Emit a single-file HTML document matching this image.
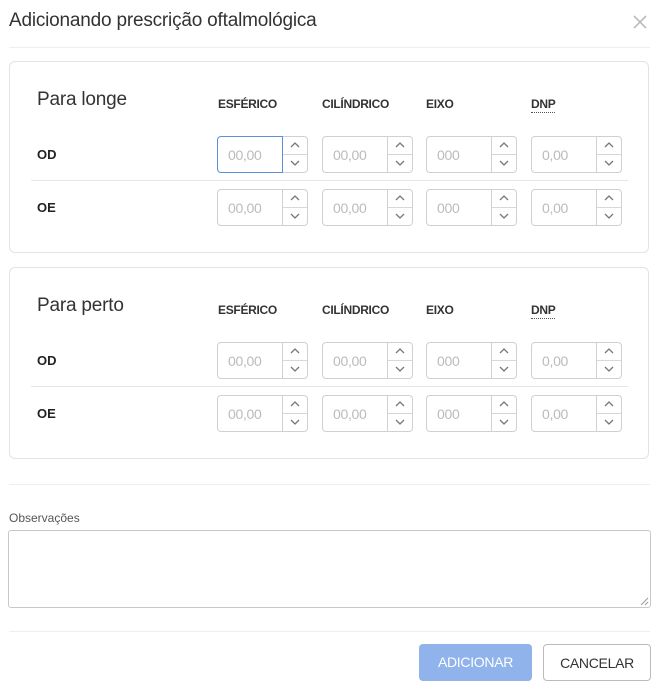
<!DOCTYPE html>
<html><head><meta charset="utf-8"><style>
body{margin:0;width:661px;height:688px;background:#fff;font-family:"Liberation Sans",sans-serif;position:relative;overflow:hidden;color:#333}
.a{position:absolute}
.title{left:9px;top:10px;font-size:19px;color:#333;letter-spacing:-0.2px}
.hr{position:absolute;height:1px;background:#eee}
.card{position:absolute;left:9px;width:640px;height:192px;border:1px solid #e3e3e3;border-radius:6px;box-sizing:border-box}
.h2{font-size:19px;color:#333;letter-spacing:-0.2px}
.th{font-size:12px;font-weight:bold;color:#333;letter-spacing:-0.3px}
.lab{font-size:13px;font-weight:bold;color:#222}
.f{position:absolute;width:91px;height:37px}
.in{position:absolute;left:0;top:0;width:66px;height:37px;box-sizing:border-box;border:1px solid #d0d0d0;border-radius:4px 0 0 4px;font-size:14px;color:#bbb;padding:10px 0 0 10px;letter-spacing:-0.3px}
.in.foc{border-color:#5b8fdc}
.sp{position:absolute;left:66px;top:0;width:25px;height:37px;box-sizing:border-box;border:1px solid #d0d0d0;border-left:none;border-radius:0 4px 4px 0}
.sp:after{content:"";position:absolute;left:0;right:0;top:17px;height:1px;background:#d8d8d8}
.sp svg{position:absolute;left:7px}
.btn{position:absolute;top:644px;height:37px;border-radius:4px;font-size:14px;box-sizing:border-box;text-align:center;line-height:37px;letter-spacing:-0.3px}
</style></head><body>
<div class="a title">Adicionando prescrição oftalmológica</div>
<svg class="a" style="left:632px;top:14px" width="16" height="16" viewBox="0 0 16 16"><path d="M2 2L14 14M14 2L2 14" stroke="#bbb" stroke-width="1.6"/></svg>
<div class="hr" style="left:9px;width:641px;top:47px"></div>

<div class="card" style="top:61px"></div>
<div class="card" style="top:267px"></div>

<div class="a h2" style="left:37px;top:89px">Para longe</div>
<div class="a h2" style="left:37px;top:295px">Para perto</div>

<div class="a th" style="left:218px;top:97px">ESFÉRICO</div>
<div class="a th" style="left:322px;top:97px">CILÍNDRICO</div>
<div class="a th" style="left:426px;top:97px">EIXO</div>
<div class="a th" style="left:531px;top:97px;border-bottom:1px dotted #555;line-height:15px">DNP</div>
<div class="a th" style="left:218px;top:303px">ESFÉRICO</div>
<div class="a th" style="left:322px;top:303px">CILÍNDRICO</div>
<div class="a th" style="left:426px;top:303px">EIXO</div>
<div class="a th" style="left:531px;top:303px;border-bottom:1px dotted #555;line-height:15px">DNP</div>

<div class="a lab" style="left:37px;top:147px">OD</div>
<div class="a lab" style="left:37px;top:200px">OE</div>
<div class="a lab" style="left:37px;top:353px">OD</div>
<div class="a lab" style="left:37px;top:406px">OE</div>
<div class="hr" style="left:31px;width:597px;top:180px;background:#e6e6e6"></div>
<div class="hr" style="left:31px;width:597px;top:386px;background:#e6e6e6"></div>

<div class="f" style="left:217px;top:136px"><div class="in foc">00,00</div><div class="sp"><svg style="top:4px" width="10" height="8"><path d="M1 6L5 2L9 6" fill="none" stroke="#777" stroke-width="1.3"/></svg><svg style="top:22px" width="10" height="8"><path d="M1 2L5 6L9 2" fill="none" stroke="#777" stroke-width="1.3"/></svg></div></div>
<div class="f" style="left:322px;top:136px"><div class="in">00,00</div><div class="sp"><svg style="top:4px" width="10" height="8"><path d="M1 6L5 2L9 6" fill="none" stroke="#777" stroke-width="1.3"/></svg><svg style="top:22px" width="10" height="8"><path d="M1 2L5 6L9 2" fill="none" stroke="#777" stroke-width="1.3"/></svg></div></div>
<div class="f" style="left:426px;top:136px"><div class="in">000</div><div class="sp"><svg style="top:4px" width="10" height="8"><path d="M1 6L5 2L9 6" fill="none" stroke="#777" stroke-width="1.3"/></svg><svg style="top:22px" width="10" height="8"><path d="M1 2L5 6L9 2" fill="none" stroke="#777" stroke-width="1.3"/></svg></div></div>
<div class="f" style="left:531px;top:136px"><div class="in">0,00</div><div class="sp"><svg style="top:4px" width="10" height="8"><path d="M1 6L5 2L9 6" fill="none" stroke="#777" stroke-width="1.3"/></svg><svg style="top:22px" width="10" height="8"><path d="M1 2L5 6L9 2" fill="none" stroke="#777" stroke-width="1.3"/></svg></div></div>

<div class="f" style="left:217px;top:189px"><div class="in">00,00</div><div class="sp"><svg style="top:4px" width="10" height="8"><path d="M1 6L5 2L9 6" fill="none" stroke="#777" stroke-width="1.3"/></svg><svg style="top:22px" width="10" height="8"><path d="M1 2L5 6L9 2" fill="none" stroke="#777" stroke-width="1.3"/></svg></div></div>
<div class="f" style="left:322px;top:189px"><div class="in">00,00</div><div class="sp"><svg style="top:4px" width="10" height="8"><path d="M1 6L5 2L9 6" fill="none" stroke="#777" stroke-width="1.3"/></svg><svg style="top:22px" width="10" height="8"><path d="M1 2L5 6L9 2" fill="none" stroke="#777" stroke-width="1.3"/></svg></div></div>
<div class="f" style="left:426px;top:189px"><div class="in">000</div><div class="sp"><svg style="top:4px" width="10" height="8"><path d="M1 6L5 2L9 6" fill="none" stroke="#777" stroke-width="1.3"/></svg><svg style="top:22px" width="10" height="8"><path d="M1 2L5 6L9 2" fill="none" stroke="#777" stroke-width="1.3"/></svg></div></div>
<div class="f" style="left:531px;top:189px"><div class="in">0,00</div><div class="sp"><svg style="top:4px" width="10" height="8"><path d="M1 6L5 2L9 6" fill="none" stroke="#777" stroke-width="1.3"/></svg><svg style="top:22px" width="10" height="8"><path d="M1 2L5 6L9 2" fill="none" stroke="#777" stroke-width="1.3"/></svg></div></div>

<div class="f" style="left:217px;top:342px"><div class="in">00,00</div><div class="sp"><svg style="top:4px" width="10" height="8"><path d="M1 6L5 2L9 6" fill="none" stroke="#777" stroke-width="1.3"/></svg><svg style="top:22px" width="10" height="8"><path d="M1 2L5 6L9 2" fill="none" stroke="#777" stroke-width="1.3"/></svg></div></div>
<div class="f" style="left:322px;top:342px"><div class="in">00,00</div><div class="sp"><svg style="top:4px" width="10" height="8"><path d="M1 6L5 2L9 6" fill="none" stroke="#777" stroke-width="1.3"/></svg><svg style="top:22px" width="10" height="8"><path d="M1 2L5 6L9 2" fill="none" stroke="#777" stroke-width="1.3"/></svg></div></div>
<div class="f" style="left:426px;top:342px"><div class="in">000</div><div class="sp"><svg style="top:4px" width="10" height="8"><path d="M1 6L5 2L9 6" fill="none" stroke="#777" stroke-width="1.3"/></svg><svg style="top:22px" width="10" height="8"><path d="M1 2L5 6L9 2" fill="none" stroke="#777" stroke-width="1.3"/></svg></div></div>
<div class="f" style="left:531px;top:342px"><div class="in">0,00</div><div class="sp"><svg style="top:4px" width="10" height="8"><path d="M1 6L5 2L9 6" fill="none" stroke="#777" stroke-width="1.3"/></svg><svg style="top:22px" width="10" height="8"><path d="M1 2L5 6L9 2" fill="none" stroke="#777" stroke-width="1.3"/></svg></div></div>

<div class="f" style="left:217px;top:395px"><div class="in">00,00</div><div class="sp"><svg style="top:4px" width="10" height="8"><path d="M1 6L5 2L9 6" fill="none" stroke="#777" stroke-width="1.3"/></svg><svg style="top:22px" width="10" height="8"><path d="M1 2L5 6L9 2" fill="none" stroke="#777" stroke-width="1.3"/></svg></div></div>
<div class="f" style="left:322px;top:395px"><div class="in">00,00</div><div class="sp"><svg style="top:4px" width="10" height="8"><path d="M1 6L5 2L9 6" fill="none" stroke="#777" stroke-width="1.3"/></svg><svg style="top:22px" width="10" height="8"><path d="M1 2L5 6L9 2" fill="none" stroke="#777" stroke-width="1.3"/></svg></div></div>
<div class="f" style="left:426px;top:395px"><div class="in">000</div><div class="sp"><svg style="top:4px" width="10" height="8"><path d="M1 6L5 2L9 6" fill="none" stroke="#777" stroke-width="1.3"/></svg><svg style="top:22px" width="10" height="8"><path d="M1 2L5 6L9 2" fill="none" stroke="#777" stroke-width="1.3"/></svg></div></div>
<div class="f" style="left:531px;top:395px"><div class="in">0,00</div><div class="sp"><svg style="top:4px" width="10" height="8"><path d="M1 6L5 2L9 6" fill="none" stroke="#777" stroke-width="1.3"/></svg><svg style="top:22px" width="10" height="8"><path d="M1 2L5 6L9 2" fill="none" stroke="#777" stroke-width="1.3"/></svg></div></div>

<div class="hr" style="left:9px;width:641px;top:484px"></div>
<div class="a" style="left:9px;top:511px;font-size:12px;color:#555">Observações</div>
<div class="a" style="left:8px;top:530px;width:643px;height:78px;box-sizing:border-box;border:1px solid #c8c8c8;border-radius:3px"></div>
<svg class="a" style="left:640px;top:597px" width="9" height="9"><path d="M8 1L1 8M8 5L5 8" stroke="#999" stroke-width="1"/></svg>
<div class="hr" style="left:9px;width:641px;top:631px"></div>
<div class="btn" style="left:419px;width:113px;background:#8fb3ea;color:#fff">ADICIONAR</div>
<div class="btn" style="left:543px;width:108px;border:1px solid #bbb;color:#333">CANCELAR</div>
</body></html>
